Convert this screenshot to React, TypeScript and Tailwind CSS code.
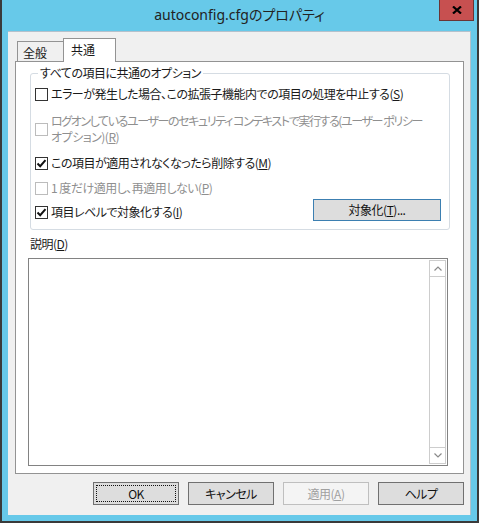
import React from "react";

function Box({ checked, disabled }: { checked?: boolean; disabled?: boolean }) {
  return (
    <span
      className={
        disabled
          ? "w-[13px] h-[13px] shrink-0 border border-[#bcbcbc] bg-white flex items-center justify-center"
          : "w-[13px] h-[13px] shrink-0 border border-[#333333] bg-white flex items-center justify-center"
      }
    >
      {checked && (
        <svg width="11" height="11" viewBox="0 0 11 11">
          <path d="M1.5 5.5 L4.2 8.2 L9.5 2.2" fill="none" stroke="#111" strokeWidth="2" />
        </svg>
      )}
    </span>
  );
}

function Btn({
  children,
  variant,
}: {
  children: React.ReactNode;
  variant?: "default" | "disabled" | "normal";
}) {
  if (variant === "default") {
    return (
      <div className="w-[86px] h-[23px] border border-[#707070] bg-[#dddddd] p-[2px]">
        <div className="w-full h-full border border-dotted border-[#111] flex items-center justify-center text-[#111]">
          {children}
        </div>
      </div>
    );
  }
  if (variant === "disabled") {
    return (
      <div className="w-[86px] h-[23px] border border-[#bfbfbf] bg-[#f4f4f4] flex items-center justify-center text-[#a0a0a0]">
        {children}
      </div>
    );
  }
  return (
    <div className="w-[86px] h-[23px] border border-[#707070] bg-[#dddddd] flex items-center justify-center text-[#111]">
      {children}
    </div>
  );
}

export default function App() {
  return (
    <div className="w-[479px] h-[523px] relative flex flex-col bg-[#67c9e9] border-x-2 border-b-2 border-[#3a3a3a] font-['Noto_Sans_CJK_JP',sans-serif] [font-feature-settings:'palt'] text-[12px] leading-[16px] tracking-[-0.5px] whitespace-nowrap text-[#1a1a1a]">
      {/* Title bar */}
      <div className="h-[31px] shrink-0 flex items-center justify-center pb-[1px] text-[14px] tracking-normal text-[#222222] font-['Noto_Sans','Noto_Sans_CJK_JP',sans-serif]">
        autoconfig.cfgのプロパティ
      </div>
      <div className="absolute top-0 right-[3px] w-[35px] h-[21px] bg-[#c75050] border border-[#6a3434] border-t-0 flex items-center justify-center">
        <svg width="10" height="8" viewBox="0 0 10 8">
          <path d="M1 0.5 L9 7.5 M9 0.5 L1 7.5" stroke="#000" strokeWidth="2.2" />
        </svg>
      </div>

      {/* Client */}
      <div className="mx-[6px] h-[484px] shrink-0 bg-[#f0f0f0] border-t border-r border-[#b4c1cc] flex flex-col pl-[7px] pr-[6px] pt-[6px]">
        {/* Tabs */}
        <div className="h-[23px] flex items-end pl-[2px]">
          <div className="w-[46px] h-[20px] border-l border-t border-[#939393] bg-[#f0f0f0] pl-[5px] pt-[3px] tracking-normal">
            全般
          </div>
          <div className="w-[53px] h-[24px] -mb-[1px] relative z-10 border-l border-t border-r border-[#939393] bg-white pl-[7px] pt-[3px] tracking-normal">
            共通
          </div>
        </div>

        {/* Panel */}
        <div className="h-[413px] border border-[#939393] bg-white flex flex-col">
          {/* Group box */}
          <div className="mt-[11px] ml-[14px] mr-[13px] relative border border-[#d5dce3] rounded-[3px] pt-[12px] pl-[4px] pr-[8px] pb-[8px] flex flex-col">
            <span className="absolute top-[-9px] left-[7px] px-[2px] bg-white">
              すべての項目に共通のオプション
            </span>
            <div className="h-[16px] flex items-center gap-[3px]">
              <Box />
              <span>
                エラーが発生した場合、この拡張子機能内での項目の処理を中止する(<u>S</u>)
              </span>
            </div>
            <div className="mt-[11px] h-[32px] flex items-center gap-[3px] text-[#8f8f8f]">
              <Box disabled />
              <span className="tracking-[-1.4px]">
                ログオンしているユーザーのセキュリティ コンテキストで実行する(ユーザー ポリシー
                <br />
                <span className="tracking-[-0.5px]">
                  オプション)(<u>R</u>)
                </span>
              </span>
            </div>
            <div className="mt-[10px] h-[16px] flex items-center gap-[3px]">
              <Box checked />
              <span>
                この項目が適用されなくなったら削除する(<u>M</u>)
              </span>
            </div>
            <div className="mt-[9px] h-[16px] flex items-center gap-[3px] text-[#8f8f8f]">
              <Box disabled />
              <span>
                1 度だけ適用し、再適用しない(<u>P</u>)
              </span>
            </div>
            <div className="mt-[3px] h-[22px] flex items-center justify-between">
              <div className="pt-[4px] flex items-center gap-[3px]">
                <Box checked />
                <span>
                  項目レベルで対象化する(<u>I</u>)
                </span>
              </div>
              <div className="w-[128px] h-[22px] border border-[#3c7fb1] bg-[#dddddd] flex items-center justify-center text-[#111]">
                対象化(<u>T</u>)...
              </div>
            </div>
          </div>

          {/* Description */}
          <div className="mt-[6px] ml-[14px]">
            説明(<u>D</u>)
          </div>
          <div className="mt-[6px] ml-[12px] mr-[15px] mb-[7px] flex-1 border border-[#828282] bg-white flex justify-end py-[1px] pr-[1px]">
            <div className="w-[17px] flex flex-col border border-[#cdcdcd] bg-white">
              <div className="h-[16px] border-b border-[#cdcdcd] flex items-center justify-center">
                <svg width="8" height="5" viewBox="0 0 8 5">
                  <path d="M0.5 4.5 L4 1 L7.5 4.5" fill="none" stroke="#8a8a8a" strokeWidth="1.2" />
                </svg>
              </div>
              <div className="flex-1" />
              <div className="h-[16px] border-t border-[#cdcdcd] flex items-center justify-center">
                <svg width="8" height="5" viewBox="0 0 8 5">
                  <path d="M0.5 0.5 L4 4 L7.5 0.5" fill="none" stroke="#8a8a8a" strokeWidth="1.2" />
                </svg>
              </div>
            </div>
          </div>
        </div>

        {/* Buttons */}
        <div className="mt-[8px] flex justify-end gap-[9px]">
          <Btn variant="default">OK</Btn>
          <Btn>キャンセル</Btn>
          <Btn variant="disabled">
            適用(<u>A</u>)
          </Btn>
          <Btn>ヘルプ</Btn>
        </div>
      </div>
    </div>
  );
}
